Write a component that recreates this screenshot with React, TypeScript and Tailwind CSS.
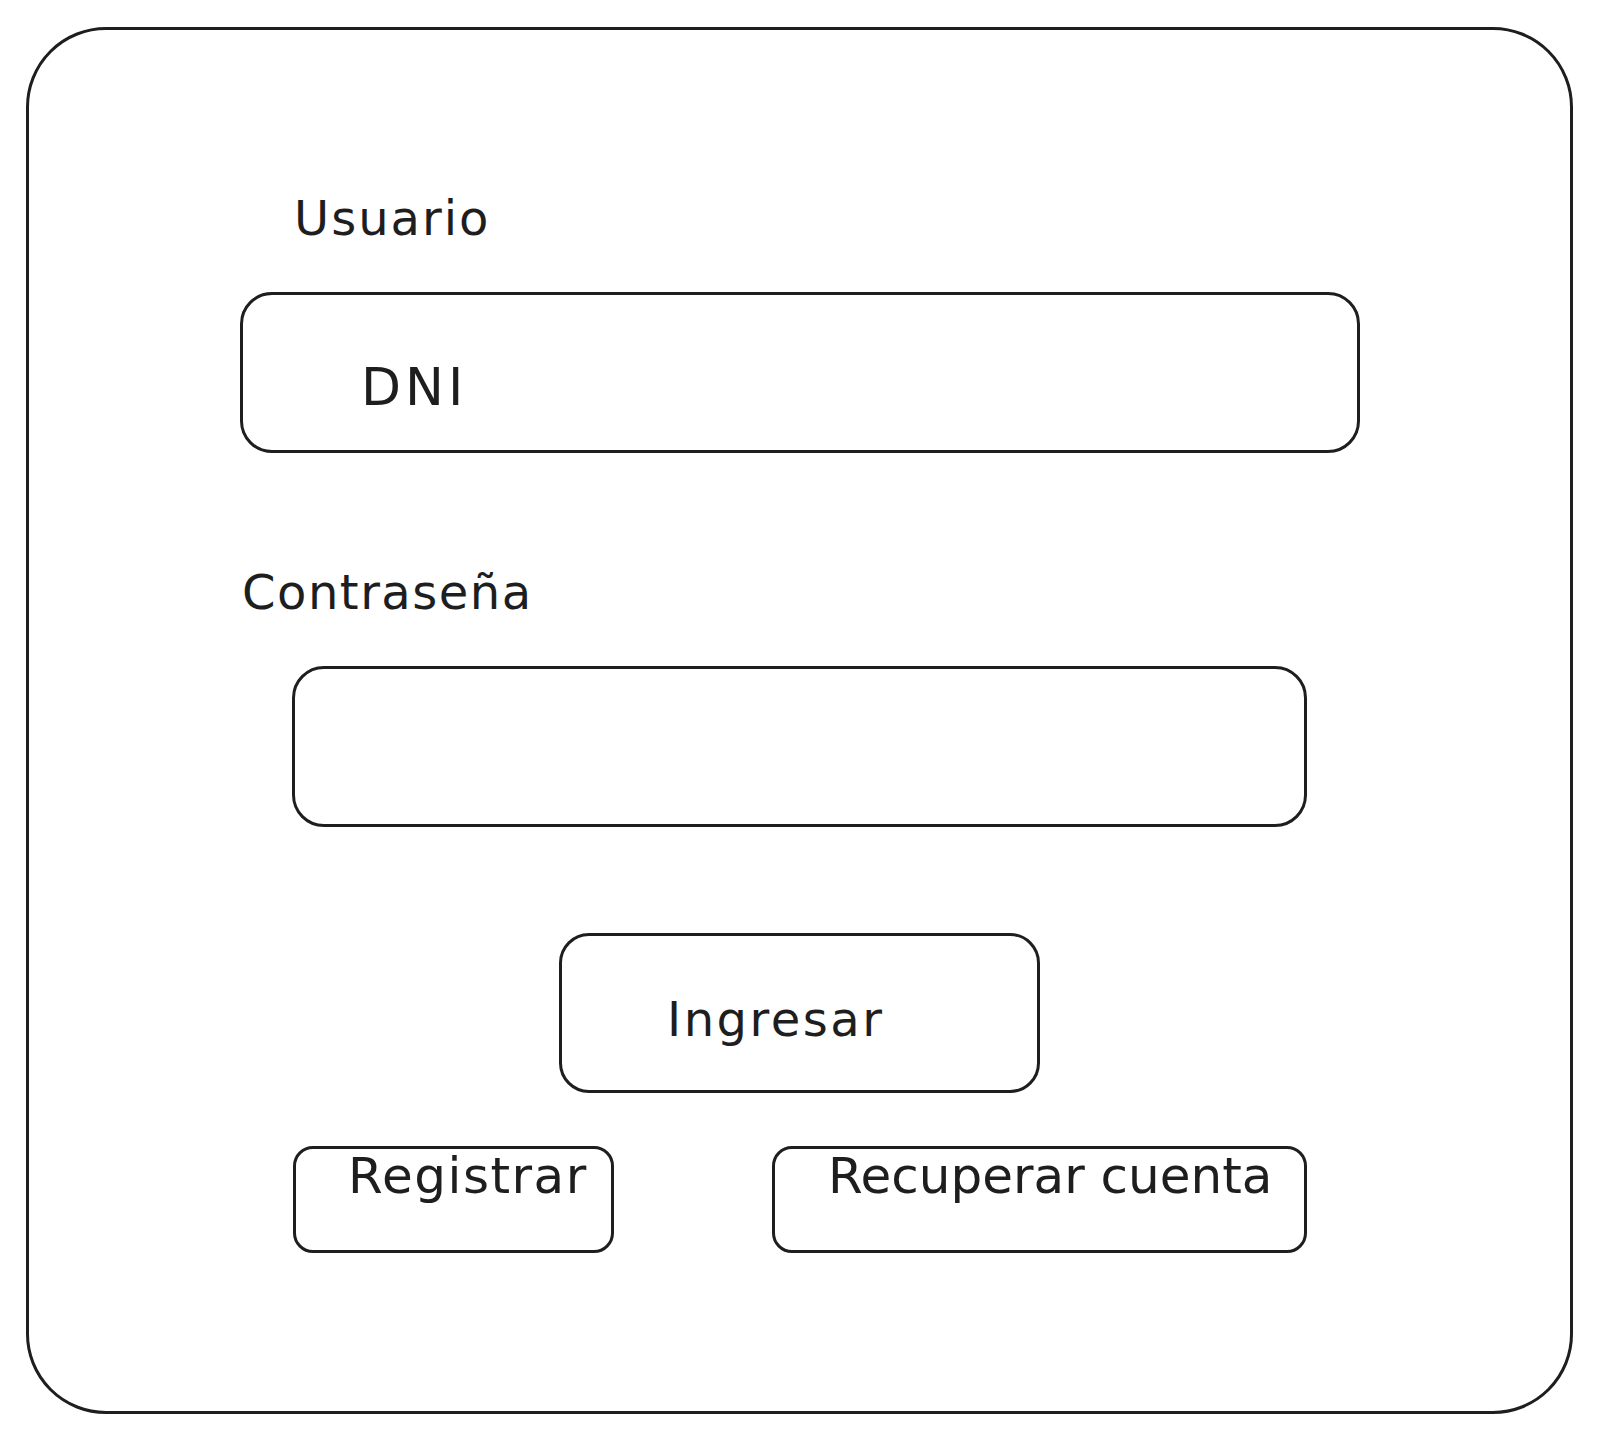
import React from 'react'

const font = { fontFamily: '"DejaVu Sans", "Liberation Sans", sans-serif' }

const Label = ({ text, className }: { text: string; className: string }) => (
    <p className={`text-[48px] leading-none text-[#1e1e1e] ${className}`} style={font}>
        {text}
    </p>
)

const App = () => {
    return (
        <div className="min-h-[1440px] w-[1600px] bg-white pt-[27px] pl-[26px]" style={font}>
            <div className="flex h-[1387px] w-[1547px] flex-col rounded-[80px] border-[3px] border-[#1e1e1e]">
                <Label text="Usuario" className="ml-[265px] mt-[164px] tracking-[2px]" />

                <div className="ml-[211px] mt-[50px] flex h-[161px] w-[1120px] items-start rounded-[32px] border-[3px] border-[#1e1e1e] pl-[118px] pt-[66px]">
                    <span className="text-[52px] leading-none tracking-[4px] text-[#1e1e1e]">DNI</span>
                </div>

                <Label text="Contraseña" className="ml-[213px] mt-[115px] tracking-[1.5px]" />

                <div className="ml-[263px] mt-[50px] h-[161px] w-[1015px] rounded-[32px] border-[3px] border-[#1e1e1e]" />

                <div className="ml-[530px] mt-[106px] flex h-[160px] w-[481px] items-start rounded-[30px] border-[3px] border-[#1e1e1e] pl-[105px] pt-[59px]">
                    <span className="text-[48px] leading-none tracking-[2.5px] text-[#1e1e1e]">Ingresar</span>
                </div>

                <div className="ml-[264px] mt-[53px] flex gap-[158px]">
                    <div className="flex h-[107px] w-[321px] items-start rounded-[20px] border-[3px] border-[#1e1e1e] pl-[52px] pt-[2px]">
                        <span className="text-[50px] leading-none tracking-[1.5px] text-[#1e1e1e]">Registrar</span>
                    </div>
                    <div className="flex h-[107px] w-[535px] items-start rounded-[20px] border-[3px] border-[#1e1e1e] pl-[53px] pt-[2px]">
                        <span className="whitespace-nowrap text-[50px] leading-none text-[#1e1e1e]">Recuperar cuenta</span>
                    </div>
                </div>
            </div>
        </div>
    )
}

export default App
